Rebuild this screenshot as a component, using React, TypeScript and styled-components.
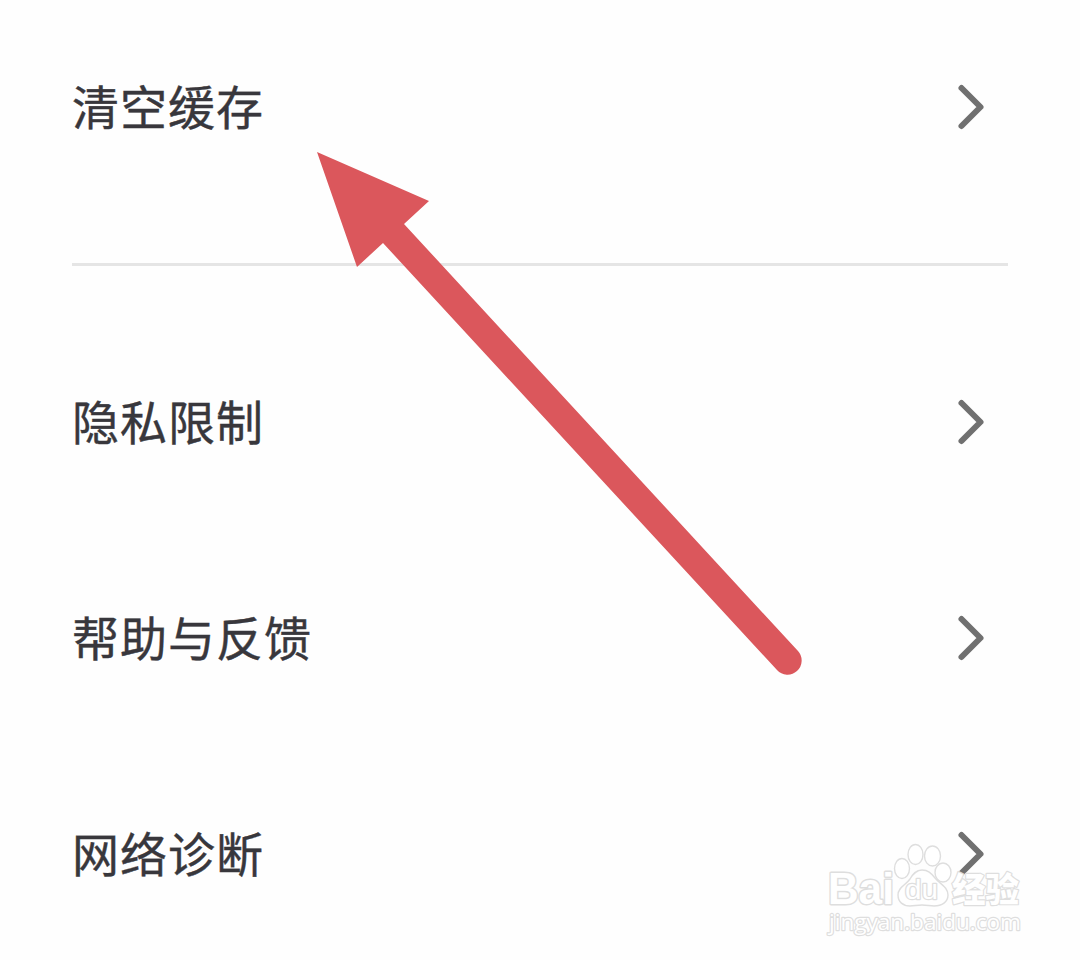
import React from "react";
import styled, { createGlobalStyle } from "styled-components";

const GlobalStyle = createGlobalStyle`
  * {
    box-sizing: border-box;
  }

  body {
    margin: 0;
    background: #fefefe;
    font-family: "Noto Sans CJK SC", sans-serif;
  }
`;

const Page = styled.main`
  position: relative;
  width: 1080px;
  height: 960px;
  padding: 0 72px;
  overflow: hidden;
`;

const Group = styled.section`
  display: flex;
  flex-direction: column;
`;

const Row = styled.div<{ $height?: number }>`
  display: flex;
  justify-content: space-between;
  align-items: center;
  flex-shrink: 0;
  height: ${({ $height }) => $height || 216}px;
  padding-right: 21px;
`;

const Label = styled.span`
  padding-bottom: 4px;
  color: #38373c;
  font-size: 47px;
  line-height: 72px;
  letter-spacing: 1px;
  -webkit-text-stroke: 0.4px #38373c;
`;

const Chevron = styled.svg`
  display: block;
  width: 32px;
  height: 50px;
  fill: none;
  stroke: #707070;
  stroke-width: 6;
  stroke-linecap: round;
  stroke-linejoin: round;
`;

const Divider = styled.hr`
  height: 3px;
  margin: 49px 0 48px;
  border: 0;
  background: #e5e5e5;
`;

const Arrow = styled.svg`
  position: absolute;
  top: 152px;
  left: 317px;
  width: 486px;
  height: 524px;
  fill: #db575c;
`;

const Watermark = styled.svg`
  position: absolute;
  top: 840px;
  left: 822px;
  width: 206px;
  height: 104px;
  fill: #fff;
  stroke: #dedede;
  stroke-width: 2.4;
  stroke-linejoin: round;
  font-family: "Liberation Sans", "Noto Sans CJK SC", sans-serif;

  text {
    paint-order: stroke;
  }
`;

const Site = styled.text`
  font-family: "Open Sans", sans-serif;
  font-size: 22px;
`;

const MenuRow = ({ label, height }: { label: string; height?: number }) => {
  return (
    <Row $height={height}>
      <Label>{label}</Label>
      <Chevron viewBox="0 0 32 50">
        <path d="M6.5 6 25.5 25 6.5 44" />
      </Chevron>
    </Row>
  );
};

const items = ["隐私限制", "帮助与反馈", "网络诊断"];

const App = () => {
  return (
    <>
      <GlobalStyle />
      <Page>
        <Group>
          <MenuRow label="清空缓存" height={214} />
        </Group>
        <Divider />
        <Group>
          {items.map((item) => (
            <MenuRow label={item} key={item} />
          ))}
        </Group>

        <Arrow viewBox="317 152 486 524">
          <path d="M317 152 429 201 404 224 798 651A14 14 0 0 1 777 670L383 243 357 267Z" />
        </Arrow>

        <Watermark viewBox="822 840 206 104">
          <text
            x="828"
            y="904"
            fontSize="44"
            fontWeight="700"
            strokeWidth="3"
            textLength="66"
            lengthAdjust="spacingAndGlyphs"
          >
            Bai
          </text>
          <g strokeWidth="1.4">
            <ellipse cx="902" cy="868.5" rx="7.5" ry="10" />
            <ellipse cx="915.5" cy="854.5" rx="7.5" ry="10" />
            <ellipse cx="932.5" cy="856" rx="8" ry="10" />
            <ellipse cx="943" cy="872.5" rx="8" ry="9.5" />
            <path d="M922 870c-6 0-9 4-12 9-4 6-12 8-12 16 0 7 5 11 12 11 4 0 7-1 12-1s8 1 12 1c8 0 14-4 14-11 0-8-8-11-13-17-4-5-7-8-13-8Z" />
          </g>
          <text
            x="905"
            y="899"
            fontSize="27"
            textLength="33"
            lengthAdjust="spacingAndGlyphs"
          >
            du
          </text>
          <text
            x="952"
            y="902"
            fontSize="34"
            fontWeight="900"
            textLength="67"
            lengthAdjust="spacingAndGlyphs"
          >
            经验
          </text>
          <Site
            x="829"
            y="930"
            textLength="192"
            lengthAdjust="spacingAndGlyphs"
          >
            jingyan.baidu.com
          </Site>
        </Watermark>
      </Page>
    </>
  );
};

export default App;
